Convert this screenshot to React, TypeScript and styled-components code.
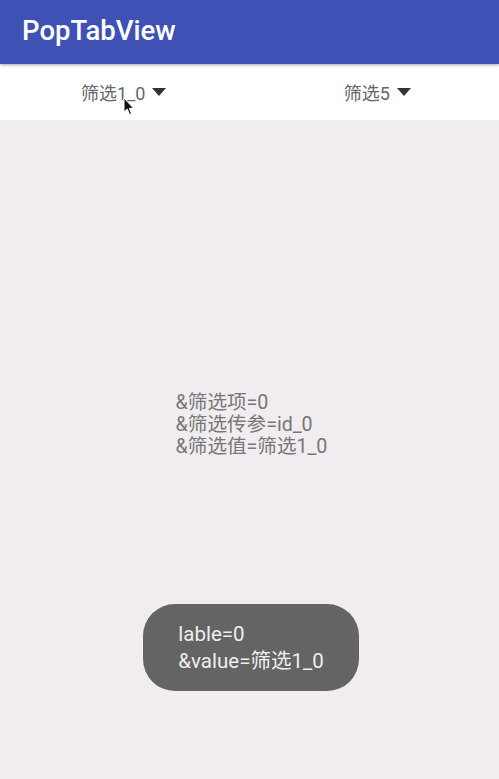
import React from 'react';
import styled, { createGlobalStyle } from 'styled-components';

const GlobalStyle = createGlobalStyle`
  html, body {
    margin: 0;
    padding: 0;
    background: #f0ecef;
    font-family: Roboto, "Noto Sans CJK SC", "Noto Sans", sans-serif;
  }
`;

const StyledPage = styled.div`
  width: 499px;
  height: 779px;
  display: flex;
  flex-direction: column;
  overflow: hidden;
  position: relative;
`;

const StyledAppBar = styled.header`
  height: 64px;
  flex-shrink: 0;
  display: flex;
  align-items: center;
  padding-left: 22px;
  background-color: #3f51b5;
  box-shadow: 0 1px 3px rgba(0, 0, 0, 0.35);
  position: relative;
  z-index: 2;
`;

const StyledTitle = styled.h1`
  margin: 0;
  margin-top: -4px;
  font-size: 27.5px;
  font-weight: 500;
  color: #ffffff;
`;

const StyledTabBar = styled.nav`
  height: 56px;
  flex-shrink: 0;
  display: flex;
  background-color: #ffffff;
`;

const StyledTab = styled.div<{ $shift?: number }>`
  flex: 1;
  display: flex;
  align-items: center;
  justify-content: center;
  gap: 7px;
  padding-left: ${(p) => p.$shift ?? 0}px;
`;

const StyledTabText = styled.span`
  font-size: 18px;
  color: #666666;
`;

const StyledContent = styled.main`
  flex: 1;
  display: flex;
  flex-direction: column;
  align-items: center;
  background-color: #f0ecef;
`;

const StyledInfo = styled.div`
  margin-top: 272px;
  margin-left: 4px;
  font-size: 19.6px;
  line-height: 22px;
  color: #777777;
`;

const StyledToast = styled.div`
  margin-top: 146px;
  margin-left: 3px;
  height: 87px;
  box-sizing: border-box;
  padding: 0 35px;
  display: flex;
  flex-direction: column;
  justify-content: center;
  border-radius: 32px;
  background-color: #646464;
  font-size: 20.5px;
  line-height: 27px;
  color: #eeeeee;
`;

const StyledCursor = styled.svg`
  position: absolute;
  left: 123px;
  top: 97px;
  z-index: 5;
`;

const Arrow = () => (
  <svg width="14" height="8" viewBox="0 0 14 8">
    <path d="M0 0 L14 0 L7 8 Z" fill="#333333" />
  </svg>
);

const App = () => {
  return (
    <StyledPage>
      <GlobalStyle />
      <StyledAppBar>
        <StyledTitle>PopTabView</StyledTitle>
      </StyledAppBar>
      <StyledTabBar>
        <StyledTab $shift={2}>
          <StyledTabText>筛选1_0</StyledTabText>
          <Arrow />
        </StyledTab>
        <StyledTab $shift={10}>
          <StyledTabText>筛选5</StyledTabText>
          <Arrow />
        </StyledTab>
      </StyledTabBar>
      <StyledContent>
        <StyledInfo>
          <div>&amp;筛选项=0</div>
          <div>&amp;筛选传参=id_0</div>
          <div>&amp;筛选值=筛选1_0</div>
        </StyledInfo>
        <StyledToast>
          <div>lable=0</div>
          <div>&amp;value=筛选1_0</div>
        </StyledToast>
      </StyledContent>
      <StyledCursor width="12" height="19" viewBox="0 0 12 19">
        <path
          d="M1 1 L1 15 L4.2 12 L6.6 17.6 L8.6 16.7 L6.3 11.3 L10.6 11.3 Z"
          fill="#111111"
          stroke="#ffffff"
          strokeWidth="1"
          strokeLinejoin="round"
        />
      </StyledCursor>
    </StyledPage>
  );
};

export default App;
